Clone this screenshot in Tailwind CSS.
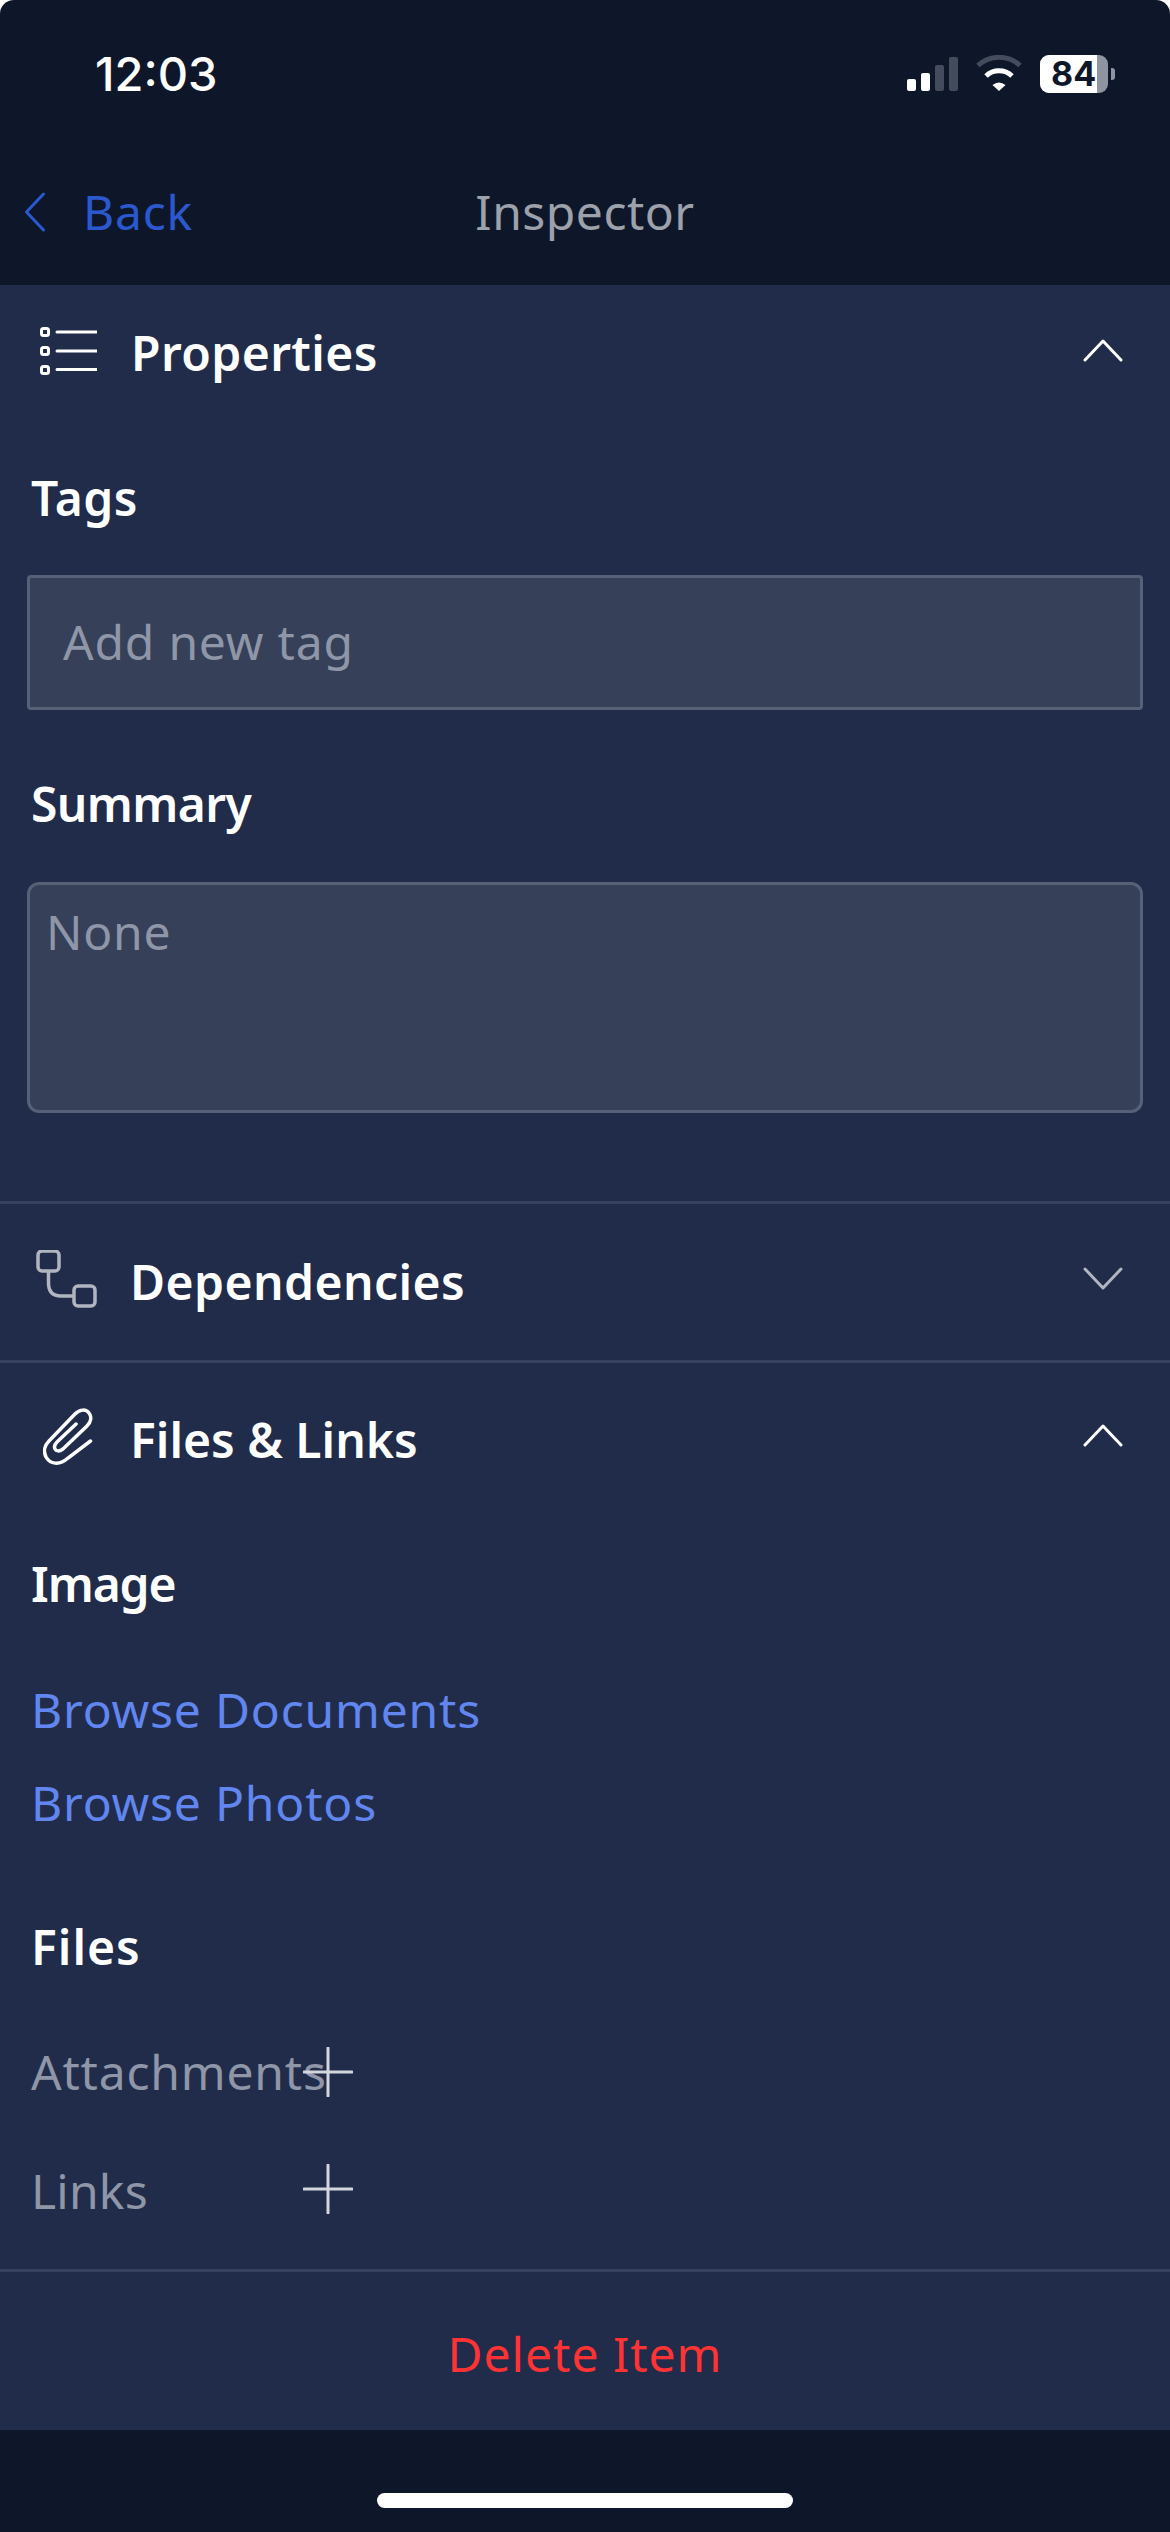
<!DOCTYPE html>
<html lang="en">
<head>
    <meta charset="UTF-8">
    <meta name="viewport" content="width=device-width, initial-scale=1.0">
    <title>Inspector</title>
    <script src="https://cdn.jsdelivr.net/npm/@tailwindcss/browser@4"></script>
</head>
<body class="bg-white font-['Noto_Sans',sans-serif]">
    <div class="w-[1170px] h-[2532px] flex flex-col bg-[#0e1729] rounded-t-[14px] overflow-hidden">
        <!-- status bar -->
        <div class="h-[150px] shrink-0 flex items-start pt-[46px] pl-[95px] relative">
            <span class="font-['Inter',sans-serif] font-medium text-[47px] leading-[56px] text-white">12:03</span>
            <div class="absolute left-[907px] top-[55px] flex items-end gap-[5px] h-[36px]">
                <div class="w-[9px] h-[12px] rounded-[2px] bg-white"></div>
                <div class="w-[9px] h-[18px] rounded-[2px] bg-white"></div>
                <div class="w-[9px] h-[26px] rounded-[2px] bg-[#434b5c]"></div>
                <div class="w-[9px] h-[34px] rounded-[2px] bg-[#434b5c]"></div>
            </div>
            <svg class="absolute left-[975px] top-[55px]" width="48" height="36" viewBox="0 0 48 36" fill="none">
                <path d="M3 10.500A31 31 0 0 1 45 10.500" stroke="#434b5c" stroke-width="5"/>
                <path d="M11 21A19 19 0 0 1 37 21" stroke="#fff" stroke-width="5"/>
                <path d="M24 36L17.500 30Q24 25 30.500 30Z" fill="#fff"/>
            </svg>
            <div class="absolute left-[1040px] top-[55px] w-[68px] h-[38px] rounded-[9px] bg-[#8f95a0] flex">
                <div class="w-[57px] h-full rounded-l-[9px] bg-white"></div>
                <span class="absolute left-[11px] top-0 font-['Inter',sans-serif] font-bold text-[34px] leading-[38px] text-[#0e1729]">84</span>
            </div>
            <div class="absolute left-[1111px] top-[68px] w-[4px] h-[12px] rounded-r-[3px] bg-[#8f95a0]"></div>
        </div>
        <!-- nav bar -->
        <div class="h-[135px] shrink-0 relative flex items-start justify-center pt-[32px]">
            <span class="text-[48px] leading-[60px] tracking-[0.5px] text-[#9ca1ab]">Inspector</span>
            <div class="absolute left-[25px] top-[32px] flex items-center h-[60px] gap-[38px]">
                <svg width="20" height="40" viewBox="0 0 20 40" fill="none"><path d="M18.500 2L1.500 20L18.500 38" stroke="#2b58cf" stroke-width="3" stroke-linecap="round" stroke-linejoin="round"/></svg>
                <span class="text-[48px] leading-[60px] tracking-[0.8px] text-[#2b58cf]">Back</span>
            </div>
        </div>
        <!-- panel -->
        <div class="h-[2145px] shrink-0 bg-[#202c4a] flex flex-col">
            <section class="h-[916px] shrink-0 flex flex-col">
                <div class="h-[158px] shrink-0 pt-[38px] pl-[40px] pr-[47px] flex items-start">
                    <svg class="w-[57px] h-[50px] shrink-0 mt-[4px]" viewBox="0 0 57 50" fill="none" stroke="#fff" stroke-width="3">
                        <rect x="1.500" y="1.500" width="7" height="7" rx="2"/>
                        <rect x="1.500" y="20.500" width="7" height="7" rx="2"/>
                        <rect x="1.500" y="39.500" width="7" height="7" rx="2"/>
                        <path d="M17 5H57M17 24H57M17 42.500H57" stroke-linecap="round"/>
                    </svg>
                    <span class="ml-[34px] text-[48px] leading-[60px] tracking-[0.4px] font-semibold text-white">Properties</span>
                    <svg class="ml-auto mt-[15px]" width="40" height="24" viewBox="0 0 40 24" fill="none"><path d="M2 22L20 3L38 22" stroke="#fff" stroke-width="3" stroke-linecap="round" stroke-linejoin="round"/></svg>
                </div>
                <div class="px-[27px]">
                    <h3 class="pl-[4px] pt-[25px] text-[48px] leading-[60px] tracking-[0.4px] font-semibold text-white">Tags</h3>
                    <input class="mt-[47px] block w-[1116px] h-[135px] px-[33px] pb-[3px] bg-[#364059] border-[3px] border-[#566077] rounded-[4px] text-[48px] tracking-[0.8px] placeholder:text-[#8e96a8]" placeholder="Add new tag">
                    <h3 class="pl-[4px] pt-[64px] text-[48px] leading-[60px] tracking-[-0.6px] font-semibold text-white">Summary</h3>
                    <textarea class="mt-[48px] block w-[1116px] h-[231px] px-[16px] pt-[17px] bg-[#364059] border-[3px] border-[#566077] rounded-[12px] resize-none text-[48px] leading-[60px] tracking-[0.8px] placeholder:text-[#8e96a8]" placeholder="None"></textarea>
                </div>
            </section>
            <section class="h-[159px] shrink-0 border-t-[3px] border-[#364160] pt-[46px] pl-[36px] pr-[47px] flex items-start">
                <svg class="w-[62px] h-[60px] shrink-0" viewBox="0 0 62 60" fill="none" stroke="#b0b5c0" stroke-width="3.500">
                    <rect x="2" y="1" width="21" height="20" rx="4"/>
                    <path d="M12.500 21V33Q12.500 46 25 46H38"/>
                    <rect x="38" y="36" width="21" height="20" rx="4"/>
                </svg>
                <span class="ml-[32px] mt-[2px] text-[48px] leading-[60px] tracking-[0.4px] font-semibold text-white">Dependencies</span>
                <svg class="ml-auto mt-[17px]" width="40" height="24" viewBox="0 0 40 24" fill="none"><path d="M2 2L20 21L38 2" stroke="#b0b5c0" stroke-width="3" stroke-linecap="round" stroke-linejoin="round"/></svg>
            </section>
            <section class="h-[909px] shrink-0 border-t-[3px] border-[#364160] flex flex-col">
                <div class="h-[161px] shrink-0 pt-[45px] pl-[43px] pr-[47px] flex items-start">
                    <svg class="w-[50px] h-[57px] shrink-0" viewBox="0 0 50 57" fill="none" stroke="#fff" stroke-width="3.500" stroke-linecap="round">
                        <path d="M47.500 33L25 50C16 58 7 56 3 49C0 43 2 37 6 33L32 6C37 1 43 1 46 5C49 9 48 14 44 18L20 41C16 44 13 43 12 41C11 39 12 36 14 34L33 16"/>
                    </svg>
                    <span class="ml-[37px] mt-[2px] text-[48px] leading-[60px] tracking-[0px] font-semibold text-white">Files &amp; Links</span>
                    <svg class="ml-auto mt-[15px]" width="40" height="24" viewBox="0 0 40 24" fill="none"><path d="M2 22L20 3L38 22" stroke="#fff" stroke-width="3" stroke-linecap="round" stroke-linejoin="round"/></svg>
                </div>
                <div class="pl-[31px]">
                    <h3 class="pt-[30px] text-[48px] leading-[60px] tracking-[-1.100px] font-semibold text-white">Image</h3>
                    <a class="block mt-[66px] text-[48px] leading-[60px] tracking-[0.8px] text-[#6186f0]">Browse Documents</a>
                    <a class="block mt-[33px] text-[48px] leading-[60px] tracking-[0.8px] text-[#6186f0]">Browse Photos</a>
                    <h3 class="mt-[84px] text-[48px] leading-[60px] tracking-[1px] font-semibold text-white">Files</h3>
                    <div class="mt-[65px] h-[60px] flex items-center">
                        <span class="w-[272px] shrink-0 whitespace-nowrap text-[48px] leading-[60px] tracking-[0.8px] text-[#8e96a8]">Attachments</span>
                        <svg class="relative" width="50" height="50" viewBox="0 0 50 50" fill="none"><path d="M25 1V49M1 25H49" stroke="#d3d6dd" stroke-width="3" stroke-linecap="round"/></svg>
                    </div>
                    <div class="mt-[57px] h-[60px] flex items-center">
                        <span class="w-[272px] shrink-0 pt-[3px] text-[48px] leading-[60px] tracking-[0.2px] text-[#8e96a8]">Links</span>
                        <svg width="50" height="50" viewBox="0 0 50 50" fill="none"><path d="M25 1V49M1 25H49" stroke="#d3d6dd" stroke-width="3" stroke-linecap="round"/></svg>
                    </div>
                </div>
            </section>
            <div class="flex-1 border-t-[3px] border-[#364160] flex items-center justify-center pt-[6px]">
                <span class="text-[48px] leading-[60px] tracking-[1px] text-[#ff3333]">Delete Item</span>
            </div>
        </div>
        <!-- home indicator -->
        <div class="flex-1 flex items-start justify-center pt-[63px]">
            <div class="w-[416px] h-[15px] rounded-full bg-white"></div>
        </div>
    </div>
</body>
</html>
